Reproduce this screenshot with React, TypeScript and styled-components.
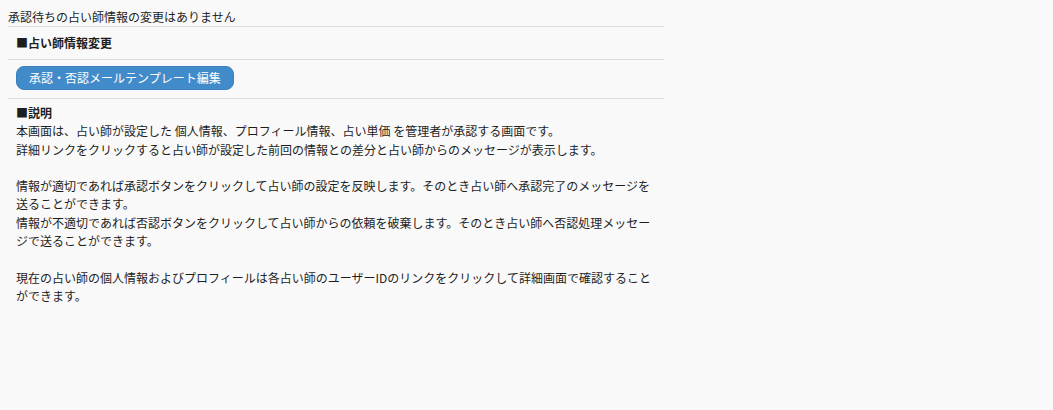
import React from "react";
import styled, { createGlobalStyle } from "styled-components";

const GlobalStyle = createGlobalStyle`
  html, body {
    margin: 0;
    background: #f9f9f9;
  }
  body {
    margin: 8px;
    font-family: "Noto Sans CJK JP", "Noto Sans", sans-serif;
    font-size: 12px;
    color: #1e1e1e;
  }
`;

const Page = styled.div`
  width: 656px;
`;

const Notice = styled.div`
  line-height: 18px;
  border-bottom: 1px solid #dcdcdc;
`;

const SectionTitle = styled.div`
  font-weight: bold;
  line-height: 18px;
  padding: 7px 8px 7px;
  border-bottom: 1px solid #dcdcdc;
`;

const ButtonRow = styled.div`
  padding: 6px 8px 8px;
  border-bottom: 1px solid #dcdcdc;
`;

const PrimaryButton = styled.button`
  display: inline-block;
  height: 24px;
  padding: 0 12px;
  border: 1px solid #3a80bf;
  border-radius: 8px;
  background: #428bca;
  color: #fff;
  font-family: inherit;
  font-size: 12px;
  line-height: 22px;
  cursor: pointer;
`;

const Description = styled.div`
  padding: 5px 8px 0;
  line-height: 18.3px;
`;

const DescTitle = styled.div`
  font-weight: bold;
`;

const Para = styled.p`
  margin: 0;
  & + & {
    margin-top: 18.3px;
  }
`;

export default function App() {
  return (
    <>
      <GlobalStyle />
      <Page>
        <Notice>承認待ちの占い師情報の変更はありません</Notice>
        <SectionTitle>■占い師情報変更</SectionTitle>
        <ButtonRow>
          <PrimaryButton type="button">承認・否認メールテンプレート編集</PrimaryButton>
        </ButtonRow>
        <Description>
          <DescTitle>■説明</DescTitle>
          <Para>
            本画面は、占い師が設定した 個人情報、プロフィール情報、占い単価 を管理者が承認する画面です。
            <br />
            詳細リンクをクリックすると占い師が設定した前回の情報との差分と占い師からのメッセージが表示します。
          </Para>
          <Para>
            情報が適切であれば承認ボタンをクリックして占い師の設定を反映します。そのとき占い師へ承認完了のメッセージを送ることができます。
            <br />
            情報が不適切であれば否認ボタンをクリックして占い師からの依頼を破棄します。そのとき占い師へ否認処理メッセージで送ることができます。
          </Para>
          <Para>
            現在の占い師の個人情報およびプロフィールは各占い師のユーザーIDのリンクをクリックして詳細画面で確認することができます。
          </Para>
        </Description>
      </Page>
    </>
  );
}
